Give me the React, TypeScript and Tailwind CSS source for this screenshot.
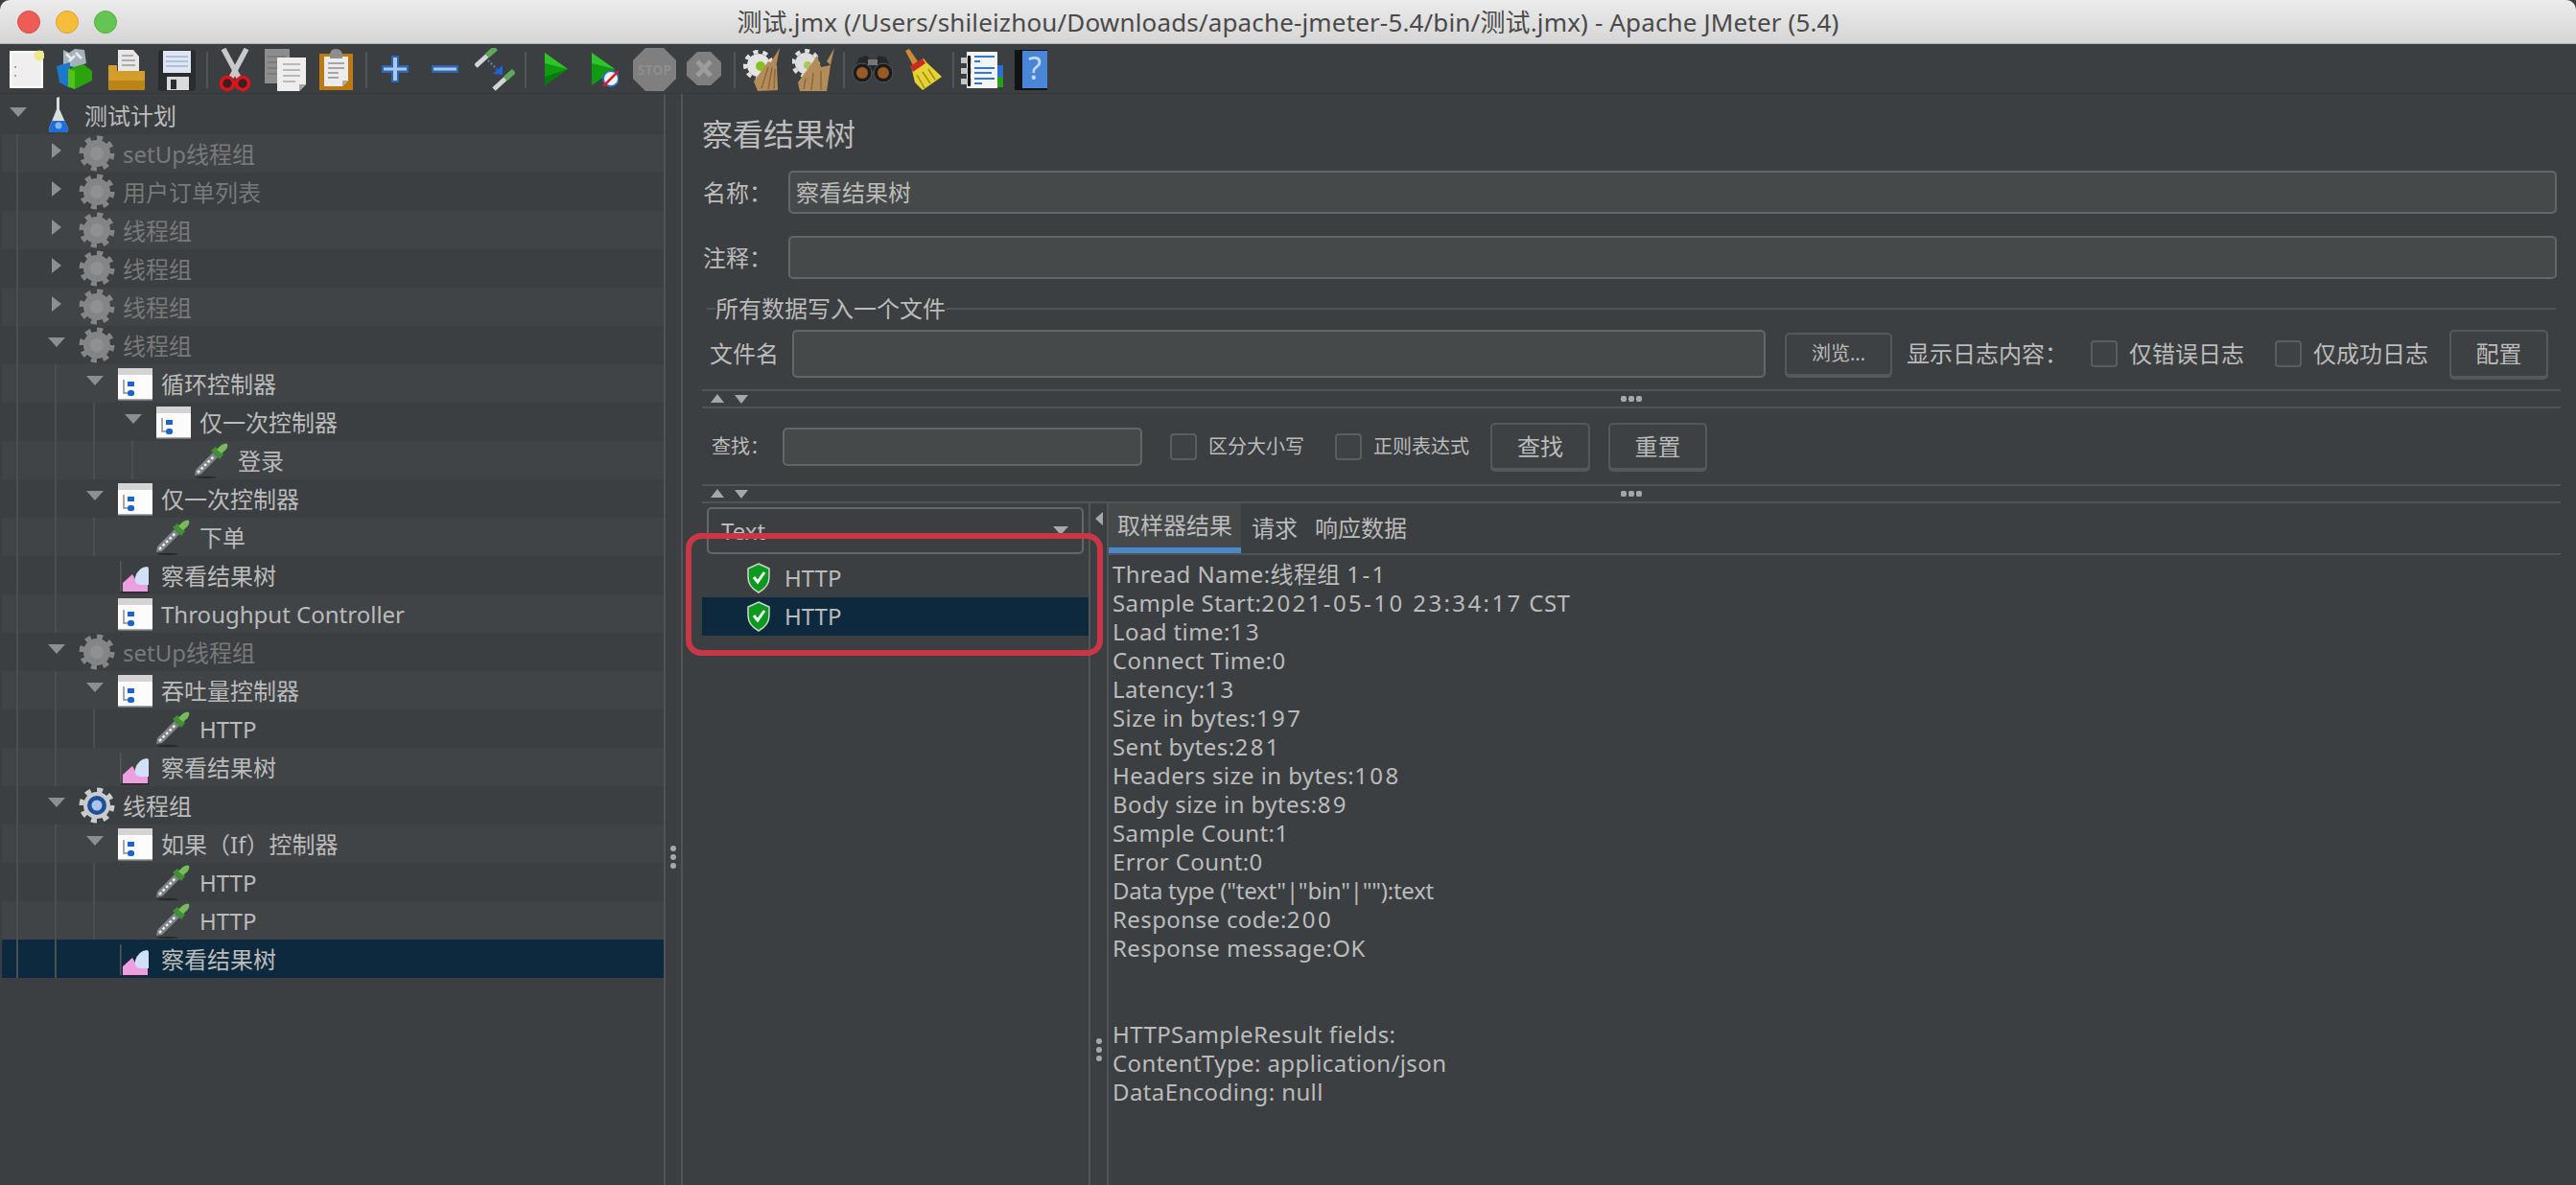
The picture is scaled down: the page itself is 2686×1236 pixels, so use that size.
const treeRows = [
  { depth: 0, arrow: 'down', icon: 'flask', label: '测试计划' },
  { depth: 1, arrow: 'right', icon: 'gearOff', label: 'setUp线程组', off: true },
  { depth: 1, arrow: 'right', icon: 'gearOff', label: '用户订单列表', off: true },
  { depth: 1, arrow: 'right', icon: 'gearOff', label: '线程组', off: true },
  { depth: 1, arrow: 'right', icon: 'gearOff', label: '线程组', off: true },
  { depth: 1, arrow: 'right', icon: 'gearOff', label: '线程组', off: true },
  { depth: 1, arrow: 'down', icon: 'gearOff', label: '线程组', off: true },
  { depth: 2, arrow: 'down', icon: 'ctrl', label: '循环控制器' },
  { depth: 3, arrow: 'down', icon: 'ctrl', label: '仅一次控制器' },
  { depth: 4, icon: 'pipe', label: '登录' },
  { depth: 2, arrow: 'down', icon: 'ctrl', label: '仅一次控制器' },
  { depth: 3, icon: 'pipe', label: '下单' },
  { depth: 2, icon: 'listen', label: '察看结果树' },
  { depth: 2, icon: 'ctrl', label: 'Throughput Controller' },
  { depth: 1, arrow: 'down', icon: 'gearOff', label: 'setUp线程组', off: true },
  { depth: 2, arrow: 'down', icon: 'ctrl', label: '吞吐量控制器' },
  { depth: 3, icon: 'pipe', label: 'HTTP' },
  { depth: 2, icon: 'listen', label: '察看结果树' },
  { depth: 1, arrow: 'down', icon: 'gear', label: '线程组' },
  { depth: 2, arrow: 'down', icon: 'ctrl', label: '如果（If）控制器' },
  { depth: 3, icon: 'pipe', label: 'HTTP' },
  { depth: 3, icon: 'pipe', label: 'HTTP' },
  { depth: 2, icon: 'listen', label: '察看结果树', selected: true },
];

const resultLines = [
  'Thread Name:线程组 1-1',
  'Sample Start:2021-05-10 23:34:17 CST',
  'Load time:13',
  'Connect Time:0',
  'Latency:13',
  'Size in bytes:197',
  'Sent bytes:281',
  'Headers size in bytes:108',
  'Body size in bytes:89',
  'Sample Count:1',
  'Error Count:0',
  'Data type ("text"|"bin"|""):text',
  'Response code:200',
  'Response message:OK',
  '',
  '',
  'HTTPSampleResult fields:',
  'ContentType: application/json',
  'DataEncoding: null',
];

// the result text has much wider digits than Noto Sans
function wideDigits(line: string) {
  return line.split(/(\d[\d:\- ]*\d|\d)/).map((part, i) =>
    i % 2 === 1 ? (
      <span key={i} className="tracking-[2.4px]">
        {part}
      </span>
    ) : (
      part
    ),
  );
}

function Gear({ off }: { off?: boolean }) {
  const body = off ? '#848586' : '#c9cbcc';
  return (
    <svg width="38" height="40" viewBox="0 0 38 40" className="shrink-0">
      <circle cx="19" cy="20" r="16" fill="none" stroke={body} strokeWidth="5" strokeDasharray="6 6.5" />
      <circle cx="19" cy="20" r="14" fill={body} />
      {off ? (
        <circle cx="19" cy="20" r="7" fill="#8f9091" />
      ) : (
        <>
          <circle cx="19" cy="20" r="10" fill="#1f4f96" />
          <circle cx="19" cy="20" r="5.5" fill="#a9c6ea" />
        </>
      )}
    </svg>
  );
}

function Flask() {
  return (
    <svg width="38" height="40" viewBox="0 0 38 40" className="shrink-0">
      <path d="M17 2 L20 1 V14 L29 34 Q30 38 26 38 H12 Q8 38 9 34 L17 14 Z" fill="#d8dde2" />
      <path d="M12.5 26 H25.5 L29 34 Q30 38 26 38 H12 Q8 38 9 34 Z" fill="#1c6fd6" />
      <circle cx="19" cy="31" r="3.5" fill="#7fb4ee" />
    </svg>
  );
}

function ControllerIcon() {
  return (
    <svg width="38" height="40" viewBox="0 0 38 40" className="shrink-0">
      <rect x="1" y="4" width="36" height="33" fill="#fcfcfc" />
      <rect x="1" y="4" width="36" height="7" fill="#d4d4d4" />
      <rect x="1" y="36" width="36" height="1.5" fill="#a8a8a8" />
      <path d="M7 16 V30 H11" fill="none" stroke="#8a8a8a" strokeWidth="1.5" />
      <rect x="11" y="18" width="7" height="5" fill="#1c62d0" />
      <rect x="11" y="27" width="7" height="6" rx="2.5" fill="#1c62d0" />
    </svg>
  );
}

function PipetteIcon() {
  return (
    <svg width="38" height="40" viewBox="0 0 38 40" className="shrink-0">
      <ellipse cx="13" cy="38" rx="11" ry="1.2" fill="#26292b" />
      <path d="M1 36 L2 30 L20 12 L25 17 L7 35 Z" fill="#7f8386" />
      <path d="M4 33 L21 16" stroke="#e8eaec" strokeWidth="2.5" strokeDasharray="3 2" />
      <path d="M18 10 L23 6 L31 14 L27 19 Z" fill="#3f8f35" />
      <path d="M24 9 Q31 1 35 3 Q37 7 29 13 Z" fill="#76bd5a" />
    </svg>
  );
}

function ListenerIcon() {
  return (
    <svg width="38" height="40" viewBox="0 0 38 40" className="shrink-0">
      <rect x="3" y="5" width="1.5" height="32" fill="#55585a" />
      <path d="M6 37 V28 L16 19 L22 29 L32 24 V37 Z" fill="#ee9fe0" />
      <path d="M19 22 Q22 12 31 11 Q33 11 33 14 V30 H25 Q18 30 19 22 Z" fill="#cfe0f7" />
      <rect x="4" y="37" width="30" height="1.5" fill="#26292b" />
    </svg>
  );
}

function TreeIcon({ name }: { name: string }) {
  if (name === 'flask') return <Flask />;
  if (name === 'gear') return <Gear />;
  if (name === 'gearOff') return <Gear off />;
  if (name === 'ctrl') return <ControllerIcon />;
  if (name === 'pipe') return <PipetteIcon />;
  return <ListenerIcon />;
}

function TreeRow({ row, index }: { row: (typeof treeRows)[number]; index: number }) {
  const bg = row.selected ? 'bg-[#0d293e]' : index % 2 === 1 ? 'bg-[#414447]' : 'bg-[#3c3f41]';
  return (
    <div className={`flex h-10 items-stretch ${bg}`}>
      {Array.from({ length: row.depth }).map((_, i) => (
        <div key={i} className="w-10 shrink-0 pl-[15px]">
          <div className="h-full w-[2px] bg-[#4b4e50]" />
        </div>
      ))}
      <div className="flex w-10 shrink-0 items-center pl-[8px]">
        {row.arrow === 'down' && (
          <svg width="18" height="10" viewBox="0 0 18 10" className="mb-[6px]">
            <path d="M0 0 H18 L9 10 Z" fill="#8c8e8f" />
          </svg>
        )}
        {row.arrow === 'right' && (
          <svg width="18" height="16" viewBox="0 0 18 16" className="mb-[6px]">
            <path d="M4 0 L14 8 L4 16 Z" fill="#8c8e8f" />
          </svg>
        )}
      </div>
      <div className="flex w-[46px] shrink-0 items-center">
        <TreeIcon name={row.icon} />
      </div>
      <span className={`self-center whitespace-nowrap pt-[2px] text-[24px] leading-[38px] ${row.off ? 'text-[#77797a]' : 'text-[#bbbbbb]'}`}>
        {row.label}
      </span>
    </div>
  );
}

function ToolSep({ className }: { className: string }) {
  return <div className={`mt-[4px] h-[38px] w-[2px] shrink-0 bg-[#515456] ${className}`} />;
}

function Toolbar() {
  return (
    <div className="flex h-[52px] shrink-0 items-start border-b border-[#36393b] bg-[#3c3f41] pt-[4px]">
      {/* new */}
      <svg width="36" height="46" viewBox="0 0 36 46" className="ml-[10px] shrink-0">
        <rect x="1" y="4" width="33" height="37" fill="#efefef" stroke="#ffffff" strokeWidth="2" />
        <circle cx="6" cy="20" r="1" fill="#888" />
        <circle cx="6" cy="29" r="1" fill="#888" />
        <circle cx="31" cy="8" r="5.5" fill="#efe98a" />
      </svg>
      {/* templates */}
      <svg width="38" height="46" viewBox="0 0 38 46" className="ml-[12px] shrink-0">
        <path d="M8 2 L14 5 L20 1 L30 2 L32 16 L20 20 L8 18 Z" fill="#a6b2b9" />
        <path d="M11 6 L17 12 M21 5 L27 11 M14 14 L20 8" stroke="#e6ecef" strokeWidth="2.5" />
        <path d="M1 19 L15 15 V42 L4 36 Z" fill="#1c78cc" />
        <path d="M13 22 L29 17 L38 24 V34 L20 43 L13 40 Z" fill="#2ba30f" />
        <path d="M13 22 L20 24 V43 L13 40 Z" fill="#52c417" />
      </svg>
      {/* open */}
      <svg width="40" height="46" viewBox="0 0 40 46" className="ml-[16px] shrink-0">
        <path d="M11 2 H27 L33 9 V24 H11 Z" fill="#e7e7e7" />
        <path d="M15 8 H27 M15 13 H29 M15 18 H29" stroke="#9a9a9a" strokeWidth="1.5" />
        <path d="M1 18 H10 V24 H39 V42 Q39 44 37 44 H3 Q1 44 1 42 Z" fill="#d49d2b" />
        <path d="M1 34 H39 V42 Q39 44 37 44 H3 Q1 44 1 42 Z" fill="#b98517" />
      </svg>
      {/* save */}
      <svg width="39" height="46" viewBox="0 0 39 46" className="ml-[13px] shrink-0">
        <rect x="0" y="2" width="39" height="43" rx="3" fill="#2b2c2f" />
        <rect x="5" y="3" width="29" height="23" fill="#dfe6f1" />
        <path d="M8 9 H31 M8 14 H31 M8 19 H31" stroke="#9db5d6" strokeWidth="1.5" />
        <rect x="9" y="30" width="23" height="14" fill="#dadada" />
        <rect x="13" y="33" width="6" height="10" fill="#2b2c2f" />
      </svg>
      <ToolSep className="ml-[11px]" />
      {/* cut */}
      <svg width="34" height="46" viewBox="0 0 34 46" className="ml-[11px] shrink-0">
        <path d="M5 1 L21 31 M29 1 L13 31" stroke="#c9c9c9" strokeWidth="5.5" />
        <circle cx="9" cy="37" r="6.5" fill="#3a2020" stroke="#dd141b" strokeWidth="3.5" />
        <circle cx="25" cy="37" r="6.5" fill="#3a2020" stroke="#dd141b" strokeWidth="3.5" />
      </svg>
      {/* copy */}
      <svg width="44" height="46" viewBox="0 0 44 46" className="ml-[14px] shrink-0">
        <rect x="0" y="1" width="26" height="36" fill="#8d8d8d" />
        <path d="M3 9 H22 M3 15 H22 M3 21 H22 M3 27 H22" stroke="#767676" strokeWidth="1.5" />
        <path d="M13 10 H43 V38 L36 45 H13 Z" fill="#eeeeee" />
        <path d="M19 17 H37 M19 23 H37 M19 29 H37 M19 35 H32" stroke="#a8a8a8" strokeWidth="1.5" />
        <path d="M36 45 V38 H43 Z" fill="#a5a5a5" />
      </svg>
      {/* paste */}
      <svg width="35" height="46" viewBox="0 0 35 46" className="ml-[13px] shrink-0">
        <rect x="0" y="6" width="35" height="38" fill="#bd7a12" />
        <path d="M5 9 H30 V34 L24 40 H5 Z" fill="#ececec" />
        <path d="M9 16 H26 M9 21 H26 M9 26 H20 M9 31 H20" stroke="#8f8f8f" strokeWidth="1.5" />
        <path d="M24 40 V34 H30 Z" fill="#a9a9a9" />
        <path d="M11 8 Q11 1 17 1 Q24 1 24 8 V11 H11 Z" fill="#8e8e8e" />
      </svg>
      <ToolSep className="ml-[13px]" />
      {/* add */}
      <svg width="28" height="46" viewBox="0 0 28 46" className="ml-[15px] shrink-0">
        <path d="M0 18 H10 V8 H18 V18 H28 V26 H18 V36 H10 V26 H0 Z" fill="#2f66b0" />
        <path d="M2 20.5 H12 V10 H16 V20.5 H26 V23.5 H16 V34 H12 V23.5 H2 Z" fill="#a9c9f0" />
      </svg>
      {/* remove */}
      <svg width="28" height="46" viewBox="0 0 28 46" className="ml-[24px] shrink-0">
        <rect x="0" y="18" width="28" height="8" fill="#2f66b0" />
        <rect x="2" y="20.5" width="24" height="3" fill="#a9c9f0" />
      </svg>
      {/* toggle */}
      <svg width="42" height="46" viewBox="0 0 42 46" className="ml-[17px] shrink-0">
        <path d="M1 19 L13 8" stroke="#d2d4d5" strokeWidth="5" />
        <path d="M13 8 L22 0" stroke="#5fa85a" strokeWidth="6" />
        <path d="M20 43 L32 32" stroke="#d2d4d5" strokeWidth="5" />
        <path d="M32 32 L41 24" stroke="#5fa85a" strokeWidth="6" />
        <path d="M14 13 L23 22" stroke="#4c88c9" strokeWidth="2" strokeDasharray="2 2" />
        <path d="M19 27 L29 18 V28 Z" fill="#1f63dc" />
      </svg>
      <ToolSep className="ml-[10px]" />
      {/* start */}
      <svg width="25" height="46" viewBox="0 0 25 46" className="ml-[18px] shrink-0">
        <path d="M1 5 L25 22 L1 39 Z" fill="#0f9a12" />
        <path d="M1 5 L25 22 L1 16 Z" fill="#2fc42a" />
        <path d="M1 39 L25 22 L1 30 Z" fill="#097a0d" />
      </svg>
      {/* start no pauses */}
      <svg width="30" height="46" viewBox="0 0 30 46" className="ml-[23px] shrink-0">
        <path d="M2 5 L26 22 L2 39 Z" fill="#0f9a12" />
        <path d="M2 5 L26 22 L2 16 Z" fill="#2fc42a" />
        <circle cx="22" cy="32" r="8" fill="#eef3fa" stroke="#2c6fc0" strokeWidth="2" />
        <path d="M14 40 L30 24" stroke="#d1202a" strokeWidth="2.5" />
      </svg>
      {/* stop */}
      <svg width="45" height="46" viewBox="0 0 45 46" className="ml-[15px] shrink-0">
        <path d="M13 0 H32 L45 13 V32 L32 45 H13 L0 32 V13 Z" fill="#7f7f7f" />
        <text x="22.5" y="28" textAnchor="middle" fontSize="14" fontWeight="700" fill="#8e8e8e">STOP</text>
      </svg>
      {/* shutdown */}
      <svg width="36" height="46" viewBox="0 0 36 46" className="ml-[11px] shrink-0">
        <path d="M11 4 H25 L36 15 V29 L25 39 H11 L0 29 V15 Z" fill="#7f7f7f" />
        <path d="M11 14 L25 29 M25 14 L11 29" stroke="#9c9c9c" strokeWidth="5" />
      </svg>
      <ToolSep className="ml-[13px]" />
      {/* clear */}
      <svg width="40" height="46" viewBox="0 0 40 46" className="ml-[8px] shrink-0">
        <circle cx="16" cy="18" r="14" fill="none" stroke="#e4e4e4" strokeWidth="4" strokeDasharray="5 5" />
        <circle cx="16" cy="18" r="12" fill="#e4e4e4" />
        <circle cx="18" cy="19" r="5" fill="#86c21f" />
        <path d="M38 0 L28 16 L34 20 Z" fill="#b08a58" />
        <path d="M26 14 L35 18 L36 44 L15 45 L11 35 Z" fill="#b48c5a" />
        <path d="M26 20 L19 42 M30 20 L26 43 M33 22 L32 43" stroke="#8a6a3e" strokeWidth="1.5" />
      </svg>
      {/* clear all */}
      <svg width="44" height="46" viewBox="0 0 44 46" className="ml-[11px] shrink-0">
        <circle cx="14" cy="16" r="13" fill="none" stroke="#dedede" strokeWidth="4" strokeDasharray="5 5" />
        <circle cx="14" cy="16" r="11" fill="#dedede" />
        <circle cx="16" cy="18" r="4" fill="#a8c85a" />
        <path d="M44 0 L36 14 L40 18 L30 20 L26 8 L22 14 L6 36 L8 45 L36 45 L40 18 Z" fill="#b48c5a" />
        <path d="M14 32 L12 43 M22 26 L20 44 M30 24 L30 44" stroke="#8a6a3e" strokeWidth="1.5" />
      </svg>
      <ToolSep className="ml-[9px]" />
      {/* search */}
      <svg width="44" height="46" viewBox="0 0 44 46" className="ml-[7px] shrink-0">
        <path d="M8 10 L16 8 L20 14 H24 L28 8 L36 10 L42 24 H2 Z" fill="#26272a" />
        <rect x="17" y="12" width="10" height="6" fill="#777" />
        <circle cx="11" cy="26" r="10" fill="#1c1c1e" stroke="#555" strokeWidth="1" />
        <circle cx="33" cy="26" r="10" fill="#1c1c1e" stroke="#555" strokeWidth="1" />
        <circle cx="11" cy="26" r="6" fill="#9a5a22" />
        <circle cx="33" cy="26" r="6" fill="#9a5a22" />
      </svg>
      {/* reset search */}
      <svg width="42" height="46" viewBox="0 0 42 46" className="ml-[8px] shrink-0">
        <path d="M4 3 L8 1 L17 14 L12 18 Z" fill="#d08a36" />
        <path d="M10 19 L23 11 L26 15 L42 30 L22 44 L14 36 Z" fill="#e4d334" />
        <path d="M9 19 L22 11 L25 16 L12 25 Z" fill="#cc2a1e" />
        <path d="M16 28 L24 42 M22 25 L30 37 M28 22 L35 33" stroke="#a88c12" strokeWidth="1.5" />
      </svg>
      <ToolSep className="ml-[11px]" />
      {/* log */}
      <svg width="45" height="46" viewBox="0 0 45 46" className="ml-[7px] shrink-0">
        <rect x="38" y="18" width="6" height="12" fill="#2d6fd0" />
        <rect x="38" y="30" width="6" height="11" fill="#2a9c20" />
        <rect x="6" y="4" width="32" height="38" fill="#f4f4f4" />
        <rect x="0" y="10" width="11" height="6" fill="#c6c6c6" />
        <rect x="0" y="21" width="11" height="6" fill="#c6c6c6" />
        <rect x="0" y="32" width="11" height="6" fill="#c6c6c6" />
        <rect x="7" y="8" width="3" height="32" fill="#151515" />
        <path d="M14 9 H35 M14 14 H20 M14 21 H35 M14 26 H32 M14 32 H35 M14 37 H22" stroke="#2f78d8" strokeWidth="2" />
      </svg>
      {/* help */}
      <svg width="36" height="46" viewBox="0 0 36 46" className="ml-[11px] shrink-0">
        <rect x="0" y="2" width="34" height="42" fill="#111214" />
        <rect x="8" y="3" width="26" height="39" fill="#4a86d8" />
        <text x="21" y="33" textAnchor="middle" fontSize="32" fill="#c6dcf5">?</text>
      </svg>
    </div>
  );
}

function TextBox({ className }: { className: string }) {
  return <div className={`rounded-[5px] border-2 border-[#646667] bg-[#45494a] ${className}`} />;
}

function PushButton({ label, className }: { label: string; className: string }) {
  return (
    <div className={`flex shrink-0 items-center justify-center rounded-[5px] border-2 border-[#56595b] bg-[#3e4143] shadow-[0_2px_0_#55585a] ${className}`}>
      {label}
    </div>
  );
}

function CheckBox({ label, className }: { label: string; className: string }) {
  return (
    <div className={`flex shrink-0 items-center ${className}`}>
      <div className="size-[28px] rounded-[4px] border-2 border-[#5b5e60] bg-[#3f4244]" />
      <span className="ml-[12px] whitespace-nowrap">{label}</span>
    </div>
  );
}

function SplitBar() {
  return (
    <div className="grid h-[20px] shrink-0 grid-cols-[1fr_auto_1fr] items-center border-y-2 border-[#515456]">
      <svg width="56" height="12" viewBox="0 0 56 12" className="ml-[9px]">
        <path d="M7 1 L14 10 H0 Z" fill="#a5a7a8" />
        <path d="M25 2 H39 L32 11 Z" fill="#a5a7a8" />
      </svg>
      <div className="flex gap-[2px]">
        <span className="size-[6px] rounded-[2px] bg-[#a5a7a8]" />
        <span className="size-[6px] rounded-[2px] bg-[#a5a7a8]" />
        <span className="size-[6px] rounded-[2px] bg-[#a5a7a8]" />
      </div>
      <div />
    </div>
  );
}

function ShieldIcon() {
  return (
    <svg width="26" height="32" viewBox="0 0 26 32" className="shrink-0">
      <path d="M13 1 L24 6 V15 Q24 25 13 31 Q2 25 2 15 V6 Z" fill="#0c9a1e" stroke="#cfd5cf" strokeWidth="1.5" />
      <path d="M8 15 L12 20 L19 10" fill="none" stroke="#f2f7f2" strokeWidth="3" />
    </svg>
  );
}

function VDots({ className }: { className: string }) {
  return (
    <div className={`flex flex-col items-center gap-[3px] ${className}`}>
      <span className="size-[6px] rounded-full bg-[#a5a7a8]" />
      <span className="size-[6px] rounded-full bg-[#a5a7a8]" />
      <span className="size-[6px] rounded-full bg-[#a5a7a8]" />
    </div>
  );
}

export default function App() {
  return (
    <div className="flex h-[1236px] w-[2686px] flex-col overflow-hidden bg-[#3c3f41] font-['Noto_Sans','Noto_Sans_CJK_SC',sans-serif] text-[24px] text-[#bbbbbb]">
      {/* title bar */}
      <div className="grid h-[46px] shrink-0 grid-cols-[200px_1fr_200px] items-center rounded-t-[10px] border-b border-[#b4b4b4] bg-gradient-to-b from-[#ececec] to-[#d5d5d5]">
        <div className="flex gap-[16px] pl-[18px]">
          <span className="size-[24px] rounded-full border border-[#d0504a] bg-[#ee5c55]" />
          <span className="size-[24px] rounded-full border border-[#d8a23a] bg-[#f6bd3b]" />
          <span className="size-[24px] rounded-full border border-[#58ad3d] bg-[#62c554]" />
        </div>
        <div className="whitespace-nowrap text-center text-[26px] leading-none tracking-[0.15px] text-[#4a4a4a]">
          测试.jmx (/Users/shileizhou/Downloads/apache-jmeter-5.4/bin/测试.jmx) - Apache JMeter (5.4)
        </div>
        <div />
      </div>

      <Toolbar />

      <div className="flex min-h-0 flex-1">
        {/* test plan tree */}
        <div className="w-[692px] shrink-0 pl-[2px] pt-[2px]">
          {treeRows.map((row, i) => (
            <TreeRow key={i} row={row} index={i} />
          ))}
        </div>

        {/* main splitter */}
        <div className="flex w-[20px] shrink-0 flex-col items-center border-x-2 border-[#515456]">
          <VDots className="mt-[784px]" />
        </div>

        {/* listener panel */}
        <div className="flex min-w-0 flex-1 flex-col pl-[20px] pr-[16px]">
          <h1 className="mt-[20px] h-[44px] text-[32px] font-normal leading-[44px]">察看结果树</h1>

          <div className="mt-[16px] flex h-[45px] items-center pr-[4px]">
            <span className="w-[70px] whitespace-nowrap pl-[1px]">名称：</span>
            <div className="ml-[20px] flex h-full flex-1 items-center rounded-[5px] border-2 border-[#646667] bg-[#45494a] pl-[6px]">察看结果树</div>
          </div>
          <div className="mt-[23px] flex h-[45px] items-center pr-[4px]">
            <span className="w-[70px] whitespace-nowrap pl-[1px]">注释：</span>
            <TextBox className="ml-[20px] h-full flex-1" />
          </div>

          {/* write results to file */}
          <div className="mt-[18px] flex h-[26px] items-center pl-[5px] pr-[5px]">
            <div className="h-[2px] w-[9px] bg-[#515456]" />
            <span className="whitespace-nowrap">所有数据写入一个文件</span>
            <div className="h-[2px] flex-1 bg-[#515456]" />
          </div>
          <div className="mt-[9px] flex h-[50px] items-center pl-[8px]">
            <span className="w-[86px] shrink-0">文件名</span>
            <TextBox className="h-full w-[1015px] shrink-0" />
            <PushButton label="浏览..." className="ml-[20px] h-[45px] w-[112px] text-[20px]" />
            <span className="ml-[15px] w-[192px] shrink-0 whitespace-nowrap">显示日志内容：</span>
            <CheckBox label="仅错误日志" className="w-[192px]" />
            <CheckBox label="仅成功日志" className="w-[182px]" />
            <PushButton label="配置" className="h-[50px] w-[103px]" />
          </div>

          <div className="mt-[12px]">
            <SplitBar />
          </div>

          {/* search */}
          <div className="mt-[15px] flex h-[49px] items-center text-[20px]">
            <span className="w-[84px] shrink-0 whitespace-nowrap pl-[10px]">查找：</span>
            <TextBox className="h-[40px] w-[375px] shrink-0" />
            <CheckBox label="区分大小写" className="ml-[29px] w-[172px]" />
            <CheckBox label="正则表达式" className="w-[162px]" />
            <PushButton label="查找" className="h-[49px] w-[104px] text-[24px]" />
            <PushButton label="重置" className="ml-[19px] h-[49px] w-[103px] text-[24px]" />
          </div>

          <div className="mt-[15px]">
            <SplitBar />
          </div>

          {/* results */}
          <div className="relative flex min-h-0 flex-1">
            <div className="w-[405px] shrink-0 border-r-2 border-[#515456]">
              <div className="mx-[5px] mt-[4px] flex h-[49px] items-center justify-between rounded-[5px] border-2 border-[#646667] pl-[13px] pr-[14px]">
                <span>Text</span>
                <svg width="16" height="9" viewBox="0 0 16 9">
                  <path d="M0 0 H16 L8 9 Z" fill="#a5a7a8" />
                </svg>
              </div>
              <div className="mt-[5px] flex h-10 items-center gap-[14px] pl-[46px]">
                <ShieldIcon />
                <span>HTTP</span>
              </div>
              <div className="flex h-10 items-center gap-[14px] bg-[#0d293e] pl-[46px]">
                <ShieldIcon />
                <span>HTTP</span>
              </div>
            </div>

            <div className="flex w-[19px] shrink-0 flex-col items-center border-r-2 border-[#515456]">
              <svg width="8" height="14" viewBox="0 0 8 14" className="mt-[9px]">
                <path d="M8 0 V14 L0 7 Z" fill="#a5a7a8" />
              </svg>
              <VDots className="mt-[535px]" />
            </div>

            <div className="min-w-0 flex-1">
              <div className="flex h-[54px] items-stretch border-b-2 border-[#515456]">
                <div className="flex w-[138px] items-center justify-center border-b-[6px] border-[#4a88c7] bg-[#45494a]">取样器结果</div>
                <div className="ml-[11px] flex items-center">请求</div>
                <div className="ml-[18px] flex items-center">响应数据</div>
              </div>
              <div className="pl-[4px] pt-[5px] tracking-[0.4px]">
                {resultLines.map((line, i) => (
                  <div key={i} className={`h-[30px] whitespace-nowrap leading-[30px] ${line.startsWith('Data type') ? 'tracking-[-0.25px]' : ''}`}>
                    {wideDigits(line)}
                  </div>
                ))}
              </div>
            </div>

            {/* red annotation round the sample list */}
            <div className="absolute left-[-17px] top-[31px] h-[128px] w-[435px] rounded-[16px] border-[6px] border-[#c93646]" />
          </div>
        </div>
      </div>
    </div>
  );
}
